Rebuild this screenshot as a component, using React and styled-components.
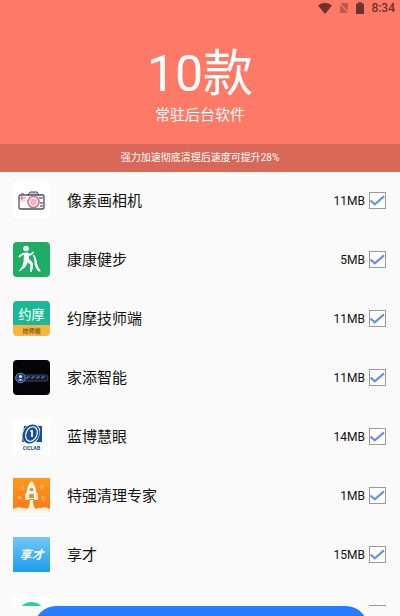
import React, { useState } from "react";
import styled, { createGlobalStyle } from "styled-components";

const GlobalStyle = createGlobalStyle`
  * {
    box-sizing: border-box;
  }

  body {
    margin: 0;
    background-color: #fafafa;
    font-family: Roboto, "Noto Sans CJK SC", sans-serif;
    color: #111111;
  }
`;

const Screen = styled.div`
  height: 100vh;
  display: flex;
  flex-direction: column;
  overflow: hidden;
`;

const Header = styled.header`
  background-color: #ff7a66;
  color: #ffffff;
  text-align: center;
`;

const StatusBar = styled.div`
  display: flex;
  justify-content: flex-end;
  align-items: center;
  gap: 7px;
  height: 16px;
  padding-right: 5px;
  font-size: 12px;
  font-weight: 500;
  color: #6b332b;
`;

const Count = styled.h1`
  margin: 0;
  padding-top: 27px;
  font-size: 50px;
  line-height: 62px;
  font-weight: 400;
`;

const Subtitle = styled.p`
  margin: 0;
  padding-bottom: 19px;
  font-size: 15px;
  line-height: 20px;
`;

const Notice = styled.p`
  margin: 0;
  background-color: #d96859;
  font-size: 10px;
  line-height: 28px;
`;

const AppList = styled.ul`
  flex: 1;
  min-height: 0;
  margin: 0 0 10px;
  padding: 0;
  list-style: none;
  overflow: hidden;
`;

const AppRow = styled.li`
  padding: 11px 14px 13px 13px;
`;

const AppLabel = styled.label`
  display: flex;
  align-items: center;
  cursor: pointer;
`;

const AppIcon = styled.svg`
  flex: none;
  width: 37px;
  height: 35px;
  border-radius: ${({ $radius }) => $radius}px;
`;

const AppName = styled.span`
  flex: 1;
  margin-left: 17px;
  font-size: 15px;
  line-height: 20px;
`;

const AppSize = styled.span`
  margin-right: 4px;
  font-size: 12px;
  line-height: 20px;
`;

const Checkbox = styled.input`
  appearance: none;
  flex: none;
  width: 17px;
  height: 17px;
  margin: 0;
  border: 1px solid #9a9a9a;
  background-color: #ffffff;

  &:checked {
    background-image: url("data:image/svg+xml,%3Csvg xmlns='http://www.w3.org/2000/svg' viewBox='0 0 15 15'%3E%3Cpath d='M0.5 7.5L4.8 11.4L14 3.4' fill='none' stroke='%236a8fe6' stroke-width='2.2'/%3E%3C/svg%3E");
  }
`;

const CleanButton = styled.button`
  position: fixed;
  left: 34px;
  right: 32px;
  bottom: -34px;
  height: 44px;
  border: none;
  border-radius: 22px;
  background-color: #267dff;
  cursor: pointer;
`;

const CameraIcon = () => (
  <AppIcon viewBox="0 0 37 35" $radius={0} aria-hidden="true">
    <rect width="37" height="35" fill="#fff" />
    <path d="M15 12l2-3h7l2 3" fill="#c9cbd6" stroke="#4a4e66" />
    <rect x="6" y="12" width="25" height="14" rx="1.5" fill="#fff" stroke="#4a4e66" strokeWidth="1.3" />
    <path d="M8 10.5h3M7 15h6M9 13v4" stroke="#dc6f8c" strokeWidth="1.2" />
    <path d="M6.5 18h6" stroke="#e9b3c2" />
    <path d="M26 15h4M27 20h3M27 23h3" stroke="#6f7288" strokeWidth="1.3" />
    <circle cx="20.5" cy="19" r="5.5" fill="#fff" stroke="#d46d8e" strokeWidth="1.6" />
    <circle cx="20.5" cy="19" r="3.4" fill="#f3b3c5" />
  </AppIcon>
);

const WalkIcon = () => (
  <AppIcon viewBox="0 0 37 35" $radius={4} aria-hidden="true">
    <rect width="37" height="35" fill="#1fac63" />
    <circle cx="13" cy="6.5" r="2.8" fill="#fff" />
    <path
      d="M6.500 14.500Q10 10.500 14.500 11.500Q17 14 20 10.500"
      fill="none"
      stroke="#fff"
      strokeWidth="1.800"
      strokeLinecap="round"
    />
    <path d="M11.500 12l4.500 0q-1 4 0 6q3 1 3.500 4q0.500 4-1.500 8q-1-1 0-7q-1-2-3.500-3q-1 5-8 9q4-5 4.500-9z" fill="#fff" stroke="#fff" strokeLinejoin="round" />
    <path d="M19.500 12.500q3 0 4 6q0.500 6 4.500 10.500l-2.500 0.500q-4.500-5-4-10q0-3-2-7z" fill="#fff" />
  </AppIcon>
);

const MassageIcon = () => (
  <AppIcon viewBox="0 0 37 35" $radius={4} aria-hidden="true">
    <rect width="37" height="25" fill="#1cb795" />
    <rect y="24" width="37" height="11" fill="#f9b440" />
    <text x="18.5" y="18" fill="#e9fff5" fontSize="13" fontWeight="500" textAnchor="middle">约摩</text>
    <text x="18.5" y="32" fill="#8a5f1c" fontSize="6" fontWeight="700" textAnchor="middle">技师端</text>
  </AppIcon>
);

const SmartHomeIcon = () => (
  <AppIcon viewBox="0 0 37 35" $radius={4} aria-hidden="true">
    <rect width="37" height="35" fill="#050507" />
    <path d="M10 15h23q2 0 2 3t-2 3H10" fill="#10192d" stroke="#39496d" />
    <path d="M14 19v-2h3M19 19v-2h3M24 19v-2h3M29 19v-2h3" fill="none" stroke="#6f86b5" />
    <circle cx="7.5" cy="18" r="4.8" fill="#1c3a72" stroke="#7187b6" />
    <circle cx="7.5" cy="16.5" r="1.5" fill="#e7efff" />
    <path d="M4.8 20.5q2.7-3 5.4 0z" fill="#e7efff" />
  </AppIcon>
);

const CiclabIcon = () => (
  <AppIcon viewBox="0 0 37 35" $radius={0} aria-hidden="true">
    <rect width="37" height="35" fill="#fff" />
    <path d="M11 7h18v16H9z" fill="#164f9e" />
    <ellipse cx="18.5" cy="15" rx="9" ry="10.500" transform="rotate(30 18.5 15)" fill="#fff" />
    <ellipse cx="18" cy="15" rx="8" ry="10" transform="rotate(30 18 15)" fill="#164f9e" />
    <ellipse cx="18.5" cy="15" rx="5.500" ry="7.500" transform="rotate(24 18.5 15)" fill="#164f9e" stroke="#fff" strokeWidth="1.200" />
    <path d="M17.500 12h1.500v6" fill="none" stroke="#fff" strokeWidth="1.800" />
    <path d="M27 7h2v16h-6q5-6 4-16z" fill="#164f9e" />
    <text x="18.5" y="31" fill="#164f9e" fontSize="5" fontWeight="700" textAnchor="middle">CICLAB</text>
  </AppIcon>
);

const RocketIcon = () => (
  <AppIcon viewBox="0 0 37 35" $radius={0} aria-hidden="true">
    <defs>
      <linearGradient id="rocketSky" x1="0" y1="0" x2="0" y2="1">
        <stop offset="0" stopColor="#ff981f" />
        <stop offset="1" stopColor="#f9761b" />
      </linearGradient>
    </defs>
    <rect width="37" height="35" fill="url(#rocketSky)" />
    <path d="M7 10l3-2 1 3-3 1zM27 8l4-1-2 4zM4 20l3-2 1 3zM29 18l4 2-3 3z" fill="none" stroke="#ffb566" />
    <path d="M14 13l-2 4v5h4M23 13l2 4v5h-4" fill="#ffe6c6" />
    <path d="M18.5 3q4.5 5 4.500 11v7h-9v-7q0-6 4.500-11z" fill="#fff" />
    <path d="M16.5 11q2-3 4 0v2h-4zM16 16h5v4h-5z" fill="#fa8b2a" />
    <path d="M17 22h3q0 7 3 9q3-2 5-1q4-2 9 1v4H0v-4q5-3 9-1q2-1 5 1q3-2 3-9z" fill="#fff3e2" />
  </AppIcon>
);

const XiangcaiIcon = () => (
  <AppIcon viewBox="0 0 37 35" $radius={0} aria-hidden="true">
    <defs>
      <linearGradient id="xiangcaiSky" x1="0" y1="0" x2="0" y2="1">
        <stop offset="0" stopColor="#72c8f8" />
        <stop offset="1" stopColor="#1d9cf0" />
      </linearGradient>
    </defs>
    <rect width="37" height="35" fill="url(#xiangcaiSky)" />
    <text x="18.5" y="22" fill="#fff" fontSize="12" fontWeight="700" fontStyle="italic" textAnchor="middle">享才</text>
  </AppIcon>
);

const GreenIcon = () => (
  <AppIcon viewBox="0 0 37 35" $radius={0} aria-hidden="true">
    <rect width="37" height="35" fill="#fff" />
    <circle cx="18.5" cy="20" r="14" fill="#2fcf9b" />
    <circle cx="18.5" cy="22" r="11" fill="#fff" />
  </AppIcon>
);

const apps = [
  { name: "像素画相机", size: "11MB", Icon: CameraIcon },
  { name: "康康健步", size: "5MB", Icon: WalkIcon },
  { name: "约摩技师端", size: "11MB", Icon: MassageIcon },
  { name: "家添智能", size: "11MB", Icon: SmartHomeIcon },
  { name: "蓝博慧眼", size: "14MB", Icon: CiclabIcon },
  { name: "特强清理专家", size: "1MB", Icon: RocketIcon },
  { name: "享才", size: "15MB", Icon: XiangcaiIcon },
  { name: "知氏行车", size: "12MB", Icon: GreenIcon },
];

const App = () => {
  const [checked, setChecked] = useState(apps.map(() => true));

  const toggleApp = (index) => {
    setChecked(checked.map((value, i) => (i === index ? !value : value)));
  };

  return (
    <Screen>
      <GlobalStyle />
      <Header>
        <StatusBar>
          <svg width="14" height="12" viewBox="0 0 14 12" aria-hidden="true">
            <path d="M0 3.5Q7-2 14 3.5L7 12z" fill="currentColor" />
          </svg>
          <svg width="10" height="12" viewBox="0 0 10 12" opacity="0.45" aria-hidden="true">
            <path d="M3 1h6v10H1V3z" fill="currentColor" />
            <path d="M0 1l10 10" stroke="#ff7a66" strokeWidth="1.5" />
          </svg>
          <svg width="8" height="12" viewBox="0 0 8 12" aria-hidden="true">
            <path d="M2.5 0h3v1.5H8V12H0V1.5h2.5z" fill="currentColor" />
          </svg>
          <span>8:34</span>
        </StatusBar>
        <Count>10款</Count>
        <Subtitle>常驻后台软件</Subtitle>
        <Notice>强力加速彻底清理后速度可提升28%</Notice>
      </Header>

      <AppList>
        {apps.map(({ name, size, Icon }, index) => (
          <AppRow key={name}>
            <AppLabel>
              <Icon />
              <AppName>{name}</AppName>
              <AppSize>{size}</AppSize>
              <Checkbox
                type="checkbox"
                checked={checked[index]}
                onChange={() => toggleApp(index)}
              />
            </AppLabel>
          </AppRow>
        ))}
      </AppList>

      <CleanButton type="button" aria-label="清理" />
    </Screen>
  );
};

export default App;
